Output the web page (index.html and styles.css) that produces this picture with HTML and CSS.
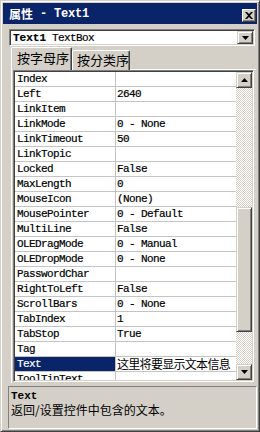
FILE: index.html
```html
<!DOCTYPE html>
<html>
<head>
<meta charset="utf-8">
<link rel="stylesheet" href="styles.css">
</head>
<body>
<div class="win">
  <div class="title">
    <span class="t-cjk">属性</span><span class="t-lat"> - Text1</span>
    <span class="close"><svg width="8" height="7" viewBox="0 0 8 7"><path d="M0 0h2l2 2 2-2h2L5 3.5 8 7H6L4 5 2 7H0l3-3.5z" fill="#000"/></svg></span>
  </div>
  <div class="combo">
    <span class="combo-text"><b>Text1</b> TextBox</span>
    <span class="btn dd"><svg width="7" height="4" viewBox="0 0 7 4"><path d="M0 0h7L3.5 4z" fill="#000"/></svg></span>
  </div>
  <div class="tabs">
    <div class="tab active">按字母序</div>
    <div class="tab">按分类序</div>
  </div>
  <div class="page">
    <div class="grid">
      <div class="list">
        <div class="row"><span class="name">Index</span><span class="val"></span></div>
        <div class="row"><span class="name">Left</span><span class="val">2640</span></div>
        <div class="row"><span class="name">LinkItem</span><span class="val"></span></div>
        <div class="row"><span class="name">LinkMode</span><span class="val">0 - None</span></div>
        <div class="row"><span class="name">LinkTimeout</span><span class="val">50</span></div>
        <div class="row"><span class="name">LinkTopic</span><span class="val"></span></div>
        <div class="row"><span class="name">Locked</span><span class="val">False</span></div>
        <div class="row"><span class="name">MaxLength</span><span class="val">0</span></div>
        <div class="row"><span class="name">MouseIcon</span><span class="val">(None)</span></div>
        <div class="row"><span class="name">MousePointer</span><span class="val">0 - Default</span></div>
        <div class="row"><span class="name">MultiLine</span><span class="val">False</span></div>
        <div class="row"><span class="name">OLEDragMode</span><span class="val">0 - Manual</span></div>
        <div class="row"><span class="name">OLEDropMode</span><span class="val">0 - None</span></div>
        <div class="row"><span class="name">PasswordChar</span><span class="val"></span></div>
        <div class="row"><span class="name">RightToLeft</span><span class="val">False</span></div>
        <div class="row"><span class="name">ScrollBars</span><span class="val">0 - None</span></div>
        <div class="row"><span class="name">TabIndex</span><span class="val">1</span></div>
        <div class="row"><span class="name">TabStop</span><span class="val">True</span></div>
        <div class="row"><span class="name">Tag</span><span class="val"></span></div>
        <div class="row sel"><span class="name">Text</span><span class="val cjk">这里将要显示文本信息</span></div>
        <div class="row"><span class="name">ToolTipText</span><span class="val"></span></div>
      </div>
      <div class="sb">
        <span class="btn sbtn"><svg width="7" height="4" viewBox="0 0 7 4"><path d="M3.5 0L7 4H0z" fill="#000"/></svg></span>
        <div class="track"><div class="thumb"></div></div>
        <span class="btn sbtn"><svg width="7" height="4" viewBox="0 0 7 4"><path d="M0 0h7L3.5 4z" fill="#000"/></svg></span>
      </div>
    </div>
  </div>
  <div class="desc">
    <div class="d-title">Text</div>
    <div class="d-text">返回/设置控件中包含的文本。</div>
  </div>
</div>
</body>
</html>
```
FILE: styles.css
```css
* { box-sizing: border-box; }
html, body { margin: 0; padding: 0; }
body {
  width: 260px;
  height: 432px;
  background: #d4d0c8;
  font-family: "Liberation Mono", monospace;
  font-size: 11px;
  color: #000;
  overflow: hidden;
}
.win {
  width: 260px;
  height: 432px;
  border: 1px solid;
  border-color: #d4d0c8 #404040 #404040 #d4d0c8;
  box-shadow: inset 1px 1px #fff, inset -1px -1px #808080;
  padding: 2px;
  display: flex;
  flex-direction: column;
  background: #d4d0c8;
}
.title {
  height: 21px;
  flex: none;
  background: #0a246a;
  color: #fff;
  display: flex;
  align-items: center;
  padding-left: 6px;
  font-weight: bold;
}
.t-cjk {
  font-family: "Noto Sans CJK SC", sans-serif;
  font-size: 12px;
  font-weight: bold;
}
.t-lat {
  font-family: "Liberation Mono", monospace;
  font-size: 12px;
  letter-spacing: -0.2px;
  white-space: pre;
}
.close {
  margin-left: auto;
  margin-right: 1px;
  align-self: flex-end;
  margin-bottom: 2px;
  width: 14px;
  height: 13px;
  background: #d4d0c8;
  border: 1px solid;
  border-color: #fff #404040 #404040 #fff;
  box-shadow: inset -1px -1px #808080;
  display: flex;
  align-items: center;
  justify-content: center;
}
.combo {
  flex: none;
  height: 17px;
  margin: 5px 2px 0 6px;
  background: #fff;
  border: 1px solid;
  border-color: #808080 #fff #fff #808080;
  box-shadow: inset 1px 1px #404040, inset -1px -1px #d4d0c8;
  display: flex;
  align-items: center;
  padding: 1px 1px 1px 3px;
}
.combo-text {
  letter-spacing: -0.6px;
  white-space: pre;
  -webkit-text-stroke: 0.2px #000;
}
.combo-text b { letter-spacing: 0; }
.btn {
  background: #d4d0c8;
  border: 1px solid;
  border-color: #d4d0c8 #404040 #404040 #d4d0c8;
  box-shadow: inset 1px 1px #fff, inset -1px -1px #808080;
  display: flex;
  align-items: center;
  justify-content: center;
}
.dd {
  margin-left: auto;
  width: 16px;
  height: 13px;
}
.tabs {
  flex: none;
  height: 22px;
  margin: 2px 0 0 8px;
  display: flex;
  align-items: flex-end;
  position: relative;
  z-index: 1;
  margin-bottom: -1px;
}
.tab {
  font-family: "Noto Sans CJK SC", sans-serif;
  font-size: 13px;
  height: 20px;
  line-height: 18px;
  border-top: 1px solid #fff;
  border-left: 1px solid #fff;
  border-right: 1px solid #404040;
  box-shadow: inset -1px 0 #808080;
  border-radius: 2px 2px 0 0;
  padding-left: 4px;
  width: 58px;
  background: #d4d0c8;
}
.tab.active {
  height: 23px;
  width: 61px;
  padding-left: 5px;
  line-height: 19px;
}
.page {
  flex: none;
  margin: 0 1px 0 8px;
  border-top: 1px solid #fff;
  border-left: 1px solid #fff;
  padding: 0 2px 1px 1px;
}
.grid {
  height: 312px;
  border: 1px solid;
  border-color: #808080 #fff #fff #808080;
  box-shadow: inset 1px 1px #404040, inset -1px -1px #d4d0c8;
  padding: 1px;
  display: flex;
}
.list {
  flex: 1;
  overflow: hidden;
  background: #fff;
}
.row {
  display: flex;
  height: 15px;
  border-bottom: 1px solid #c4c4c4;
  line-height: 14px;
  letter-spacing: -0.6px;
  white-space: pre;
  -webkit-text-stroke: 0.2px #000;
}
.name {
  width: 101px;
  flex: none;
  border-right: 1px solid #c4c4c4;
  padding-left: 2px;
}
.val {
  flex: 1;
  padding-left: 1px;
}
.val.cjk {
  font-family: "Noto Sans CJK SC", sans-serif;
  font-size: 12px;
  letter-spacing: -0.7px;
  -webkit-text-stroke: 0;
}
.row.sel .name {
  background: #0a246a;
  color: #fff;
  -webkit-text-stroke: 0.2px #fff;
}
.sb {
  width: 16px;
  flex: none;
  display: flex;
  flex-direction: column;
}
.sbtn {
  width: 16px;
  height: 16px;
  flex: none;
}
.track {
  flex: 1;
  background-color: #d4d0c8;
  background-image: conic-gradient(#fff 25%, #d4d0c8 0 50%, #fff 0 75%, #d4d0c8 0);
  background-size: 2px 2px;
}
.thumb {
  margin-top: 119px;
  height: 125px;
  background: #d4d0c8;
  border: 1px solid;
  border-color: #d4d0c8 #404040 #404040 #d4d0c8;
  box-shadow: inset 1px 1px #fff, inset -1px -1px #808080;
}
.desc {
  flex: 1;
  margin: 3px 0 0 5px;
  border: 1px solid;
  border-color: #808080 #fff #fff #808080;
  padding: 3px 2px 0 2px;
}
.d-title {
  font-weight: bold;
  font-size: 11px;
  line-height: 12px;
}
.d-text {
  font-family: "Noto Sans CJK SC", sans-serif;
  font-size: 12px;
  line-height: 15px;
}
```
